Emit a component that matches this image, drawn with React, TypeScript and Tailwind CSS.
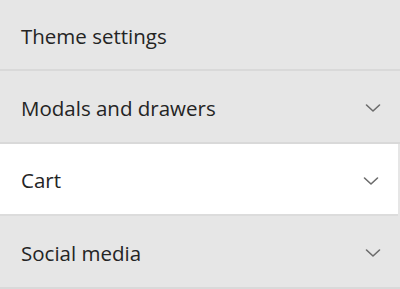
const rows = [
  { label: 'Theme settings', chevron: false, active: false, height: 'h-[71px]' },
  { label: 'Modals and drawers', chevron: true, active: false, height: 'h-[73px]' },
  { label: 'Cart', chevron: true, active: true, height: 'h-[72px]' },
  { label: 'Social media', chevron: true, active: false, height: 'h-[73px]' },
];

const Chevron = () => (
  <svg width="18" height="18" viewBox="0 0 18 18" fill="none" className="text-[#6b6b6b]">
    <path d="M2.5 6 9 12l6.5-6" stroke="currentColor" strokeWidth="1.6" strokeLinecap="round" strokeLinejoin="round" />
  </svg>
);

const App = () => {
  return (
    <div
      className="flex h-[289px] w-[400px] flex-col overflow-hidden bg-[#e6e6e6]"
      style={{ fontFamily: '"Open Sans", "Noto Sans", sans-serif' }}
    >
      {rows.map((row) => (
        <div
          key={row.label}
          className={`flex ${row.height} shrink-0 items-center justify-between border-b-2 pl-[21px] pr-[18px] pt-[3px] ${
            row.active ? 'mr-[2px] border-[#dcdcdc] bg-white' : 'border-[#d9d9d9] bg-[#e6e6e6]'
          }`}
        >
          <span className="text-[20.5px] font-medium text-[#242424]">{row.label}</span>
          {row.chevron && <Chevron />}
        </div>
      ))}
    </div>
  );
};

export default App;
